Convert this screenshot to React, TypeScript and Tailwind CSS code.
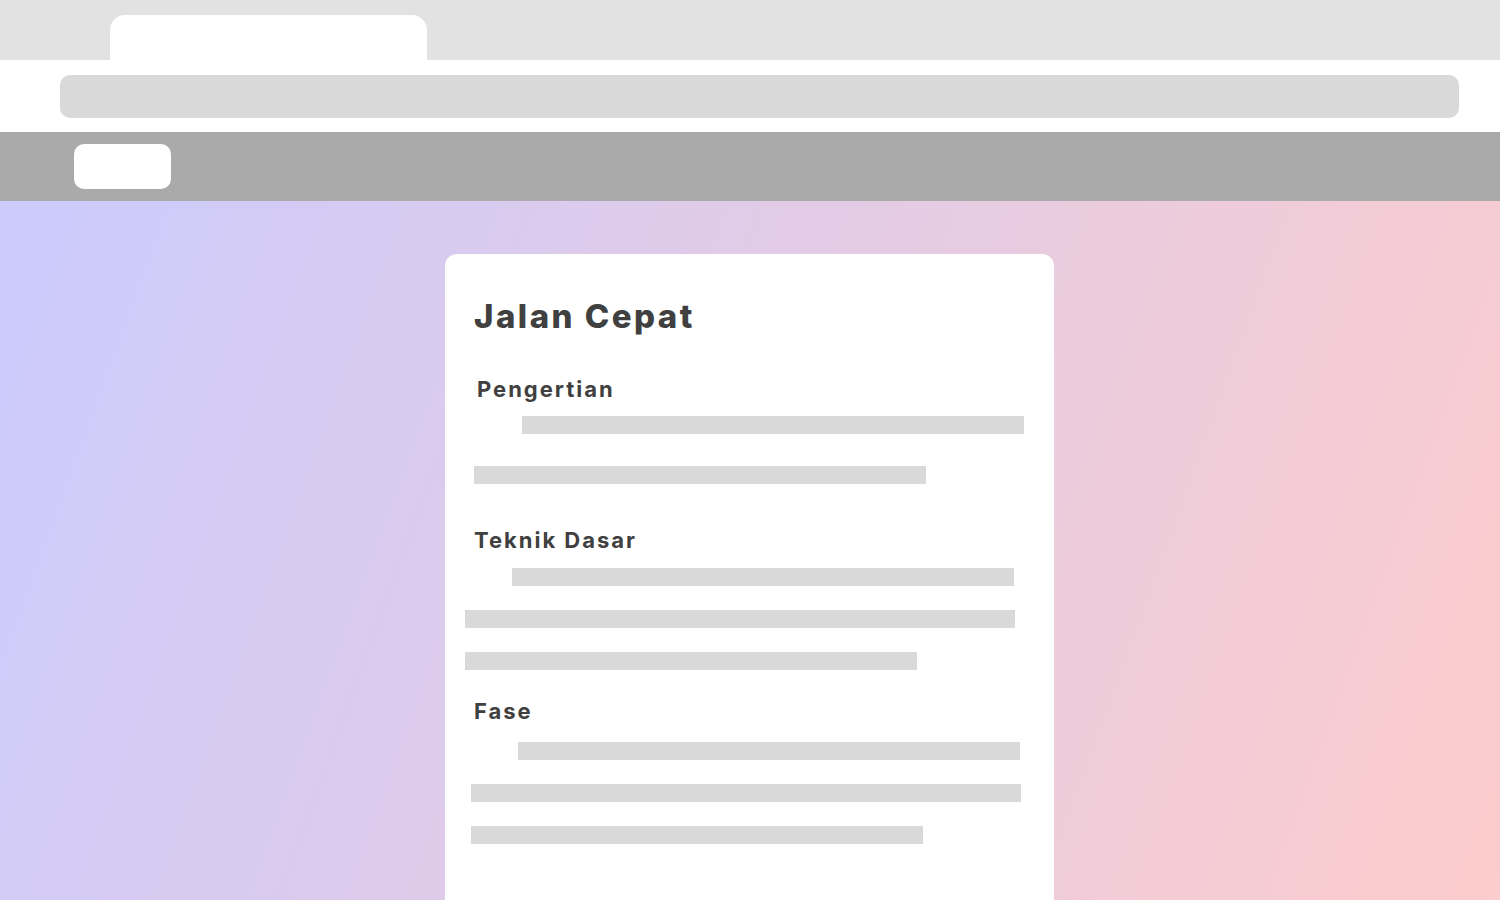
import React from 'react';

const Bar: React.FC<{ className: string }> = ({ className }) => (
  <div className={`h-[18px] bg-[#d9d9d9] ${className}`} />
);

export default function App() {
  return (
    <div className="h-[900px] w-full overflow-hidden font-['Inter',sans-serif] text-[#404040]">
      {/* Browser tabs */}
      <div className="flex h-[60px] items-end bg-[#e2e2e2] pl-[110px]">
        <div className="h-[45px] w-[317px] rounded-t-[15px] bg-white" />
      </div>

      {/* Address bar */}
      <div className="flex h-[72px] items-center bg-white px-[60px] pr-[41px]">
        <div className="h-[43px] w-full rounded-[10px] bg-[#d9d9d9]" />
      </div>

      {/* Nav */}
      <div className="flex h-[69px] items-center bg-[#aaaaaa] pl-[74px]">
        <div className="h-[45px] w-[97px] rounded-[10px] bg-white" />
      </div>

      {/* Content */}
      <main className="h-[699px] overflow-hidden bg-linear-[110deg] from-[#cbcbfd] to-[#fdcccc] pt-[53px]">
        <div className="ml-[445px] h-[700px] w-[609px] rounded-[12px] bg-white pt-[42px]">
          <h1 className="pl-[29px] text-[33px] leading-[40px] font-extrabold tracking-[0.075em]">Jalan Cepat</h1>

          <section className="mt-[39px]">
            <h2 className="pl-[32px] text-[22px] leading-[28px] font-bold tracking-[0.09em]">Pengertian</h2>
            <Bar className="mt-[13px] ml-[77px] w-[502px]" />
            <Bar className="mt-[32px] ml-[29px] w-[452px]" />
          </section>

          <section className="mt-[42px]">
            <h2 className="pl-[29px] text-[22px] leading-[28px] font-bold tracking-[0.09em]">Teknik Dasar</h2>
            <Bar className="mt-[14px] ml-[67px] w-[502px]" />
            <Bar className="mt-[24px] ml-[20px] w-[550px]" />
            <Bar className="mt-[24px] ml-[20px] w-[452px]" />
          </section>

          <section className="mt-[27px]">
            <h2 className="pl-[29px] text-[22px] leading-[28px] font-bold tracking-[0.09em]">Fase</h2>
            <Bar className="mt-[17px] ml-[73px] w-[502px]" />
            <Bar className="mt-[24px] ml-[26px] w-[550px]" />
            <Bar className="mt-[24px] ml-[26px] w-[452px]" />
          </section>
        </div>
      </main>
    </div>
  );
}
